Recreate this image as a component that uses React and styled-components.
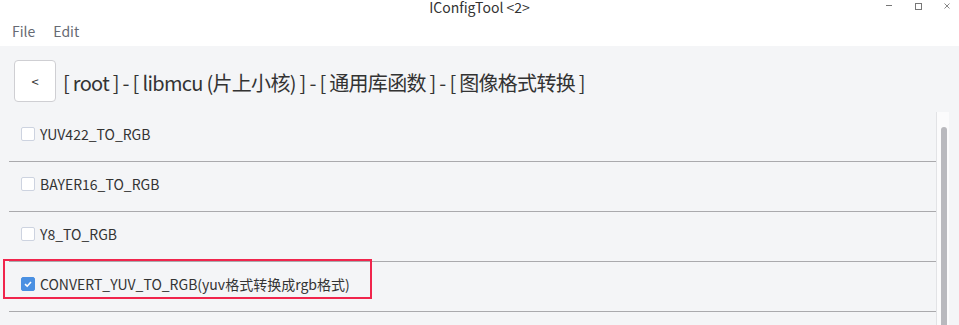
import React from "react";
import styled, { createGlobalStyle } from "styled-components";

const Global = createGlobalStyle`
  html, body { margin: 0; padding: 0; }
  body {
    background: #f4f5f7;
    font-family: "Noto Sans CJK SC", "Noto Sans", sans-serif;
    color: #333;
    overflow: hidden;
  }
`;

const Window = styled.div`
  width: 959px;
  height: 325px;
  display: flex;
  flex-direction: column;
  background: #f4f5f7;
  overflow: hidden;
`;

const TitleBar = styled.div`
  height: 17px;
  background: #fff;
  position: relative;
  display: flex;
  align-items: flex-start;
  justify-content: center;
`;

const Title = styled.div`
  font-size: 14px;
  line-height: 15px;
  color: #333;
`;

const WinButtons = styled.div`
  position: absolute;
  right: 8px;
  top: 2px;
  display: flex;
  gap: 21px;
  align-items: center;
`;

const MenuBar = styled.div`
  height: 29px;
  background: #fff;
  display: flex;
  align-items: center;
  gap: 18px;
  padding-left: 12px;
  padding-bottom: 2px;
  box-sizing: border-box;
`;

const MenuItem = styled.span`
  font-size: 14px;
  color: #666a73;
`;

const Header = styled.div`
  display: flex;
  align-items: center;
  gap: 7px;
  padding: 14px 0 0 14px;
`;

const BackButton = styled.button`
  width: 42px;
  height: 42px;
  box-sizing: border-box;
  background: #fff;
  border: 1px solid #cfcfd3;
  border-radius: 4px;
  font-family: inherit;
  font-size: 13px;
  color: #333;
  padding: 0;
  display: flex;
  align-items: center;
  justify-content: center;
`;

const Breadcrumb = styled.div`
  font-size: 20px;
  letter-spacing: -0.7px;
  color: #333;
  white-space: nowrap;
  margin-top: 2px;
`;

const Body = styled.div`
  flex: 1;
  display: flex;
  margin-top: 10px;
  min-height: 0;
`;

const List = styled.div`
  width: 927px;
  margin-left: 9px;
  display: flex;
  flex-direction: column;
`;

const Row = styled.div`
  position: relative;
  height: 50px;
  flex: none;
  box-sizing: border-box;
  border-bottom: 1px solid #aaaaad;
  display: flex;
  align-items: center;
  gap: 5px;
  padding: 0 0 5px 12px;
  font-size: 14px;
  color: #333;
`;

const Box = styled.span`
  width: 14px;
  height: 14px;
  box-sizing: border-box;
  border-radius: 2px;
  border: 1px solid ${(p) => (p.$checked ? "#4a90e2" : "#cdd3e0")};
  background: ${(p) => (p.$checked ? "#4a90e2" : "#fff")};
  display: flex;
  align-items: center;
  justify-content: center;
  flex: none;
`;

const Highlight = styled.div`
  position: absolute;
  left: -6px;
  top: -3px;
  width: 369px;
  height: 40px;
  box-sizing: border-box;
  border: 2px solid #f0254c;
  pointer-events: none;
`;

const Track = styled.div`
  width: 13px;
  box-sizing: border-box;
  background: #fbfbfc;
  border-left: 1px solid #e2e3e6;
  display: flex;
  justify-content: center;
  padding-top: 15px;
`;

const Thumb = styled.div`
  width: 6px;
  background: #b9b9be;
  border-radius: 3px 3px 0 0;
  margin-left: 1px;
`;

const items = [
  { label: "YUV422_TO_RGB" },
  { label: "BAYER16_TO_RGB" },
  { label: "Y8_TO_RGB" },
  { label: "CONVERT_YUV_TO_RGB(yuv格式转换成rgb格式)", checked: true, highlight: true },
];

export default function App() {
  return (
    <Window>
      <Global />
      <TitleBar>
        <Title>IConfigTool &lt;2&gt;</Title>
        <WinButtons>
          <svg width="8" height="8" viewBox="0 0 8 8">
            <line x1="1" y1="3.5" x2="7" y2="3.5" stroke="#777" strokeWidth="1" />
          </svg>
          <svg width="8" height="8" viewBox="0 0 8 8">
            <rect x="1.5" y="1.5" width="6" height="6" fill="none" stroke="#777" strokeWidth="1" />
          </svg>
          <svg width="8" height="8" viewBox="0 0 8 8">
            <path d="M1.5 1.5 L6.5 6.5 M6.5 1.5 L1.5 6.5" stroke="#888" strokeWidth="1" />
          </svg>
        </WinButtons>
      </TitleBar>
      <MenuBar>
        <MenuItem>File</MenuItem>
        <MenuItem>Edit</MenuItem>
      </MenuBar>
      <Header>
        <BackButton>&lt;</BackButton>
        <Breadcrumb>[ root ] - [ libmcu (片上小核) ] - [ 通用库函数 ] - [ 图像格式转换 ]</Breadcrumb>
      </Header>
      <Body>
        <List>
          {items.map((it) => (
            <Row key={it.label}>
              <Box $checked={it.checked}>
                {it.checked && (
                  <svg width="10" height="10" viewBox="0 0 10 10">
                    <path d="M2 5.2 L4.2 7.2 L8 3" fill="none" stroke="#fff" strokeWidth="1.6" />
                  </svg>
                )}
              </Box>
              <span>{it.label}</span>
              {it.highlight && <Highlight />}
            </Row>
          ))}
        </List>
        <Track>
          <Thumb />
        </Track>
      </Body>
    </Window>
  );
}
